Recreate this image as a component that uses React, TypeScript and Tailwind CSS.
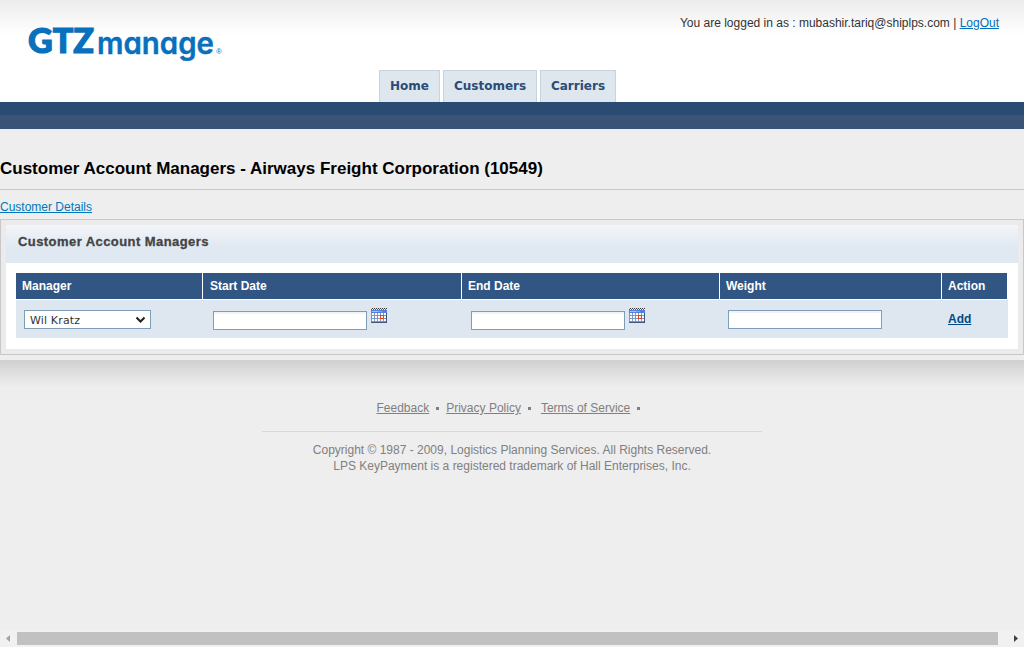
import React from "react";

const sans = "font-['Liberation_Sans',Arial,sans-serif]";
const verdana = "font-['DejaVu_Sans',Verdana,sans-serif]";

function Logo() {
  return (
    <svg className="block h-[45px] w-[204px] overflow-visible" viewBox="0 0 204 45" fill="#0870bc" stroke="#0870bc" role="img" aria-label="GTZmanage">
      <text x="4" y="33" strokeWidth="1.2" className="font-['Lato',sans-serif] text-[35px] font-black" textLength="66" lengthAdjust="spacingAndGlyphs">
        GTZ
      </text>
      <text
        x="73"
        y="33.6"
        strokeWidth="0.4"
        className="font-['Inter',sans-serif] text-[30px] font-semibold [font-feature-settings:'cv11'_1]"
        textLength="117"
        lengthAdjust="spacingAndGlyphs"
      >
        manage
      </text>
      <text x="192" y="33.5" strokeWidth="0" className="font-['Liberation_Sans',sans-serif] text-[8px]">
        ®
      </text>
    </svg>
  );
}

function Tab({ children, width }: { children: React.ReactNode; width: string }) {
  return (
    <a
      className={`${width} ${verdana} flex h-8 items-center justify-center border border-b-0 border-[#c9d3de] bg-[#dee6ee] pb-0.5 text-[12px] font-bold text-[#2a4c77]`}
    >
      {children}
    </a>
  );
}

function CalendarIcon() {
  return (
    <svg className="block size-4" viewBox="0 0 16 16" shapeRendering="crispEdges">
      <rect y="2" width="16" height="13" fill="#7896c8" />
      <path d="M1 .5H16" stroke="#333" strokeDasharray="1 1" />
      <path d="M0 1.5H16" stroke="#f0f3f8" />
      <path d="M0 1.5H16" stroke="#555" strokeDasharray="1 1" />
      <rect y="2" width="16" height="3" fill="#5480dc" />
      <path d="M1 3.5H7" stroke="#a5c2fa" />
      <path d="M7 3.5H11" stroke="#7ba1ef" />
      <g fill="#fff">
        <path d="M1 5h2v2H1zM4 5h2v2H4zM7 5h2v2H7zM10 5h2v2h-2zM13 5h2v2h-2z" />
        <path d="M1 8h2v2H1zM4 8h2v2H4zM7 8h2v2H7zM13 8h2v2h-2z" />
        <path d="M1 11h2v2H1zM4 11h2v2H4zM7 11h2v2H7zM10 11h2v2h-2zM13 11h2v2h-2z" />
      </g>
      <rect x="9.5" y="7.5" width="3" height="3" fill="#fff" stroke="#f0440f" />
      <path d="M0 14.5H16M15.5 5V15" stroke="#405878" />
    </svg>
  );
}

function Field() {
  return <input className="block h-[19px] w-[154px] border border-[#7f9db9] bg-white shadow-[inset_0_2px_0_#f3f3f3] outline-none" />;
}

function Bullet({ className }: { className: string }) {
  return <span className={`${className} size-[3px] bg-[#808080]`} />;
}

const columns = "grid grid-cols-[186px_258px_257px_221px_66px] gap-x-px";

export default function App() {
  return (
    <div className={`${sans} flex h-[647px] w-[1024px] flex-col overflow-hidden bg-[#eeeeee] text-[12px] text-[#333]`}>
      <header className="flex h-[102px] shrink-0 flex-col justify-between bg-white bg-linear-to-b from-[#ececec] to-white to-[35px]">
        <div className="flex h-[70px] justify-between pr-[25px] pl-6">
          <div className="pt-5">
            <Logo />
          </div>
          <div className="pt-[15px] leading-4 whitespace-nowrap">
            You are logged in as : mubashir.tariq@shiplps.com |{" "}
            <a className="text-[#0070bb] underline">LogOut</a>
          </div>
        </div>
        <nav className="flex gap-[3px] pl-[379px]">
          <Tab width="w-[61px]">Home</Tab>
          <Tab width="w-[94px]">Customers</Tab>
          <Tab width="w-[76px]">Carriers</Tab>
        </nav>
      </header>
      <div className="h-[27px] shrink-0 border-b-[14px] border-[#3a5478] bg-[#2a4c73]" />

      <h1 className="mt-[26px] h-[35px] shrink-0 border-b border-[#c8c8c8] pt-1 text-[17px] leading-5 font-bold whitespace-nowrap text-black">
        Customer Account Managers - Airways Freight Corporation (10549)
      </h1>
      <div className="h-[29px] shrink-0 pt-[9px] leading-4">
        <a className="text-[#0078bf] underline">Customer Details</a>
      </div>

      <section className="h-[136px] shrink-0 border border-[#c8c8c8] bg-[#ebebeb] p-[5px]">
        <h2 className="h-[38px] bg-linear-to-b from-[#f3f6fa] to-[#e0e8f2] to-[22px] pt-2 pl-3 text-[13px] leading-[18px] font-bold tracking-[0.43px] text-[#444] [-webkit-text-stroke:0.3px_#444]">
          Customer Account Managers
        </h2>
        <div className="h-[86px] bg-white pt-2.5 pr-2.5 pl-2.5">
          <div className={`${columns} h-[26px] text-[12px] leading-[26px] font-bold text-white *:bg-[#315683] *:pl-1.5`}>
            <div>Manager</div>
            <div className="indent-px">Start Date</div>
            <div>End Date</div>
            <div>Weight</div>
            <div className="mr-px">Action</div>
          </div>
          <div className={`${columns} mt-px h-[38px] bg-[#dee6ef]`}>
            <div className="pt-2.5 pl-2">
              <div className={`${verdana} flex h-[19px] w-[127px] items-center justify-between border border-[#7f9db9] bg-white pr-[5px] pl-[5px] text-[11px] tracking-[0.15px]`}>
                <span className="pt-[3px]">Wil Kratz</span>
                <svg className="h-2 w-[9px]" viewBox="0 0 9 8" fill="none" stroke="#222" strokeWidth="2">
                  <path d="M.5 1.5 4.5 5.5 8.5 1.5" />
                </svg>
              </div>
            </div>
            <div className="flex gap-1 pt-[11px] pl-2.5">
              <Field />
              <div className="-mt-[3px]"><CalendarIcon /></div>
            </div>
            <div className="flex gap-1 pt-[11px] pl-[9px]">
              <Field />
              <div className="-mt-[3px]"><CalendarIcon /></div>
            </div>
            <div className="pt-2.5 pl-2">
              <Field />
            </div>
            <div className="pt-[11px] pl-1.5 leading-4">
              <a className="font-bold text-[#004b87] underline">Add</a>
            </div>
          </div>
        </div>
      </section>

      <footer className="mt-[5px] flex min-h-0 flex-1 flex-col items-center bg-linear-to-b from-[#d0d0d0] to-[#eeeeee] to-[27px] leading-4 text-[#808080]">
        <div className="flex h-[72px] w-[500px] items-start border-b border-[#d8d8d8] pt-10 pl-[114.5px] whitespace-nowrap">
          <a className="underline">Feedback</a>
          <Bullet className="mt-[7px] mr-[7px] ml-[7px]" />
          <a className="underline">Privacy Policy</a>
          <Bullet className="mt-[7px] mr-[10px] ml-[7px]" />
          <a className="underline">Terms of Service</a>
          <Bullet className="mt-[7px] ml-[7px]" />
        </div>
        <div className="pt-[10px] text-center">
          Copyright © 1987 - 2009, Logistics Planning Services. All Rights Reserved.
          <br />
          LPS KeyPayment is a registered trademark of Hall Enterprises, Inc.
        </div>
      </footer>

      <div className="flex h-[17px] shrink-0 items-center justify-between bg-[#f1f1f1] pr-1.5 pl-1.5">
        <svg className="h-[7px] w-1" viewBox="0 0 4 7" fill="#a3a3a3"><path d="M4 0v7L0 3.5z" /></svg>
        <div className="mr-4 ml-[7px] h-[13px] flex-1 bg-[#c1c1c1]" />
        <svg className="h-[7px] w-1" viewBox="0 0 4 7" fill="#404040"><path d="M0 0v7l4-3.5z" /></svg>
      </div>
    </div>
  );
}
